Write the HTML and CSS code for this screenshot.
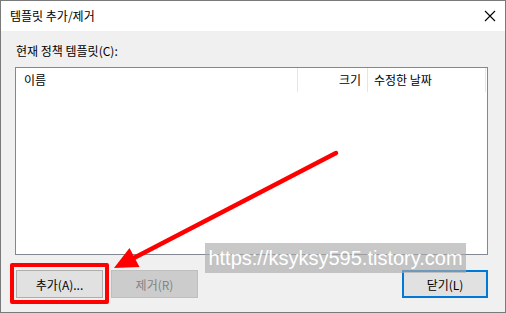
FILE: index.html
```html
<!DOCTYPE html>
<html>
    <head>
        <meta charset="utf-8">
        <link rel="stylesheet" href="styles.css">
    </head>

    <body>
        <div class="window">
            <header class="titlebar">
                <span class="title">템플릿 추가/제거</span>
                <svg class="close" width="12" height="12" viewBox="0 0 12 12">
                    <path d="M1 1 L11 11 M11 1 L1 11" stroke="#000" stroke-width="1.1" fill="none"/>
                </svg>
            </header>

            <section class="content">
                <p class="label">현재 정책 템플릿(C):</p>
                <div class="list">
                    <div class="list-head">
                        <span class="col col-name">이름</span>
                        <span class="col col-size">크기</span>
                        <span class="col col-date">수정한 날짜</span>
                    </div>
                </div>

                <div class="buttons">
                    <button class="btn">추가(A)...</button>
                    <button class="btn disabled">제거(R)</button>
                    <span class="spacer"></span>
                    <button class="btn default">닫기(L)</button>
                </div>
            </section>
        </div>

        <div class="watermark">https://ksyksy595.tistory.com</div>
        <div class="highlight"></div>
        <svg class="arrow" width="506" height="313" viewBox="0 0 506 313">
            <line x1="336" y1="153" x2="130" y2="260" stroke="#ff0000" stroke-width="4.5" stroke-linecap="round"/>
            <polygon points="114,268 129.5,248 139.5,267" fill="#ff0000"/>
        </svg>
    </body>
</html>
```

FILE: styles.css
```css
body {
    margin: 0;
    font-family: "Noto Sans CJK KR", "Noto Sans", sans-serif;
    font-size: 12px;
    color: #000;
}

.window {
    position: relative;
    width: 506px;
    height: 313px;
    box-sizing: border-box;
    border: 1px solid #7a7a7a;
    background: #f0f0f0;
    display: flex;
    flex-direction: column;
}

.titlebar {
    height: 30px;
    background: #fff;
    display: flex;
    align-items: center;
    padding: 0 9px 0 9px;
}
.title {
    flex: 1;
    line-height: 16px;
}

.content {
    flex: 1;
    display: flex;
    flex-direction: column;
    padding: 12px 17px 0 14px;
}

.label {
    margin: 0 0 8px 1px;
    line-height: 16px;
}

.list {
    height: 188px;
    box-sizing: border-box;
    border: 1px solid #828790;
    background: #fff;
}
.list-head {
    display: flex;
    height: 24px;
}
.col {
    box-sizing: border-box;
    height: 24px;
    line-height: 24px;
    border-right: 1px solid #e5e5e5;
}
.col-name {
    width: 282px;
    padding-left: 8px;
}
.col-size {
    width: 70px;
    text-align: right;
    padding-right: 6px;
}
.col-date {
    width: 118px;
    padding-left: 6px;
}

.buttons {
    display: flex;
    gap: 8px;
    margin-top: 15px;
    padding-left: 1px;
}
.spacer {
    flex: 1;
}
.btn {
    width: 87px;
    height: 28px;
    box-sizing: border-box;
    border: 1px solid #adadad;
    background: #e1e1e1;
    font-family: "Noto Sans CJK KR", "Noto Sans", sans-serif;
    font-size: 12px;
    color: #000;
    padding: 0;
}
.btn.disabled {
    background: #cccccc;
    border-color: #bfbfbf;
    color: #838383;
}
.btn.default {
    width: 86px;
    border: 2px solid #0078d7;
}

.watermark {
    position: absolute;
    left: 205px;
    top: 243px;
    width: 261px;
    height: 30px;
    background: rgba(170, 170, 170, 0.65);
    color: #fff;
    font-family: "Liberation Sans", sans-serif;
    font-size: 20px;
    line-height: 30px;
    text-align: center;
    white-space: nowrap;
}

.highlight {
    position: absolute;
    left: 10px;
    top: 263px;
    width: 91px;
    height: 33px;
    border: 4px solid #ff0000;
    border-radius: 2px;
}

.arrow {
    position: absolute;
    left: 0;
    top: 0;
    pointer-events: none;
}
```
